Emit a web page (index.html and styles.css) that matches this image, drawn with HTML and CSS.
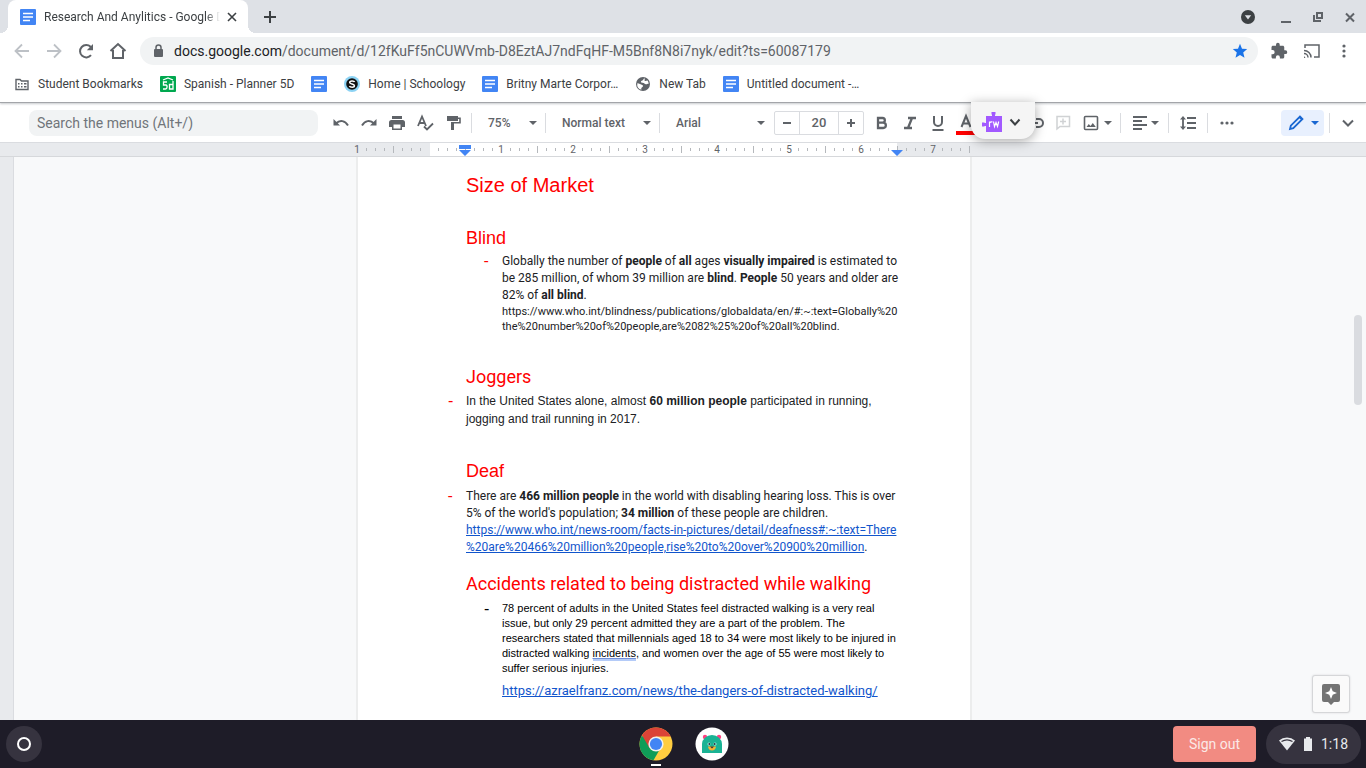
FILE: index.html
```html
<!DOCTYPE html>
<html lang="en">
<head>
<meta charset="utf-8">
<title>Research And Anylitics - Google Docs</title>
<link rel="stylesheet" href="styles.css">
</head>
<body>
<svg class="defs" aria-hidden="true">
  <symbol id="doc" viewBox="0 0 16 16"><rect width="16" height="16" rx="1" fill="#4285f4"/><path d="M3 4.500h10M3 8h10M3 11.500h7" stroke="#fff" stroke-width="1.700"/></symbol>
  <symbol id="caret" viewBox="0 0 8 4"><path d="M0 0h8L4 4z" fill="currentColor"/></symbol>
</svg>

<header class="browser">
  <div class="tabstrip">
    <div class="tab">
      <svg width="16" height="16"><use href="#doc"/></svg>
      <span class="tab-title">Research And Anylitics - Google Docs</span>
      <button class="bare" aria-label="Close tab"><svg width="16" height="16" viewBox="0 0 16 16"><path d="M4 4l8 8M12 4l-8 8" stroke="#3c4043" stroke-width="1.600"/></svg></button>
    </div>
    <button class="bare new-tab" aria-label="New tab"><svg width="16" height="16" viewBox="0 0 16 16"><path d="M8 2v12M2 8h12" stroke="#3c4043" stroke-width="2"/></svg></button>
    <div class="window-buttons">
      <button class="bare" aria-label="Search tabs"><svg width="16" height="16" viewBox="0 0 16 16"><circle cx="8" cy="8" r="7" fill="#3c4043"/><path d="M4.800 6.200h6.400L8 10.500z" fill="#dee1e6"/></svg></button>
      <button class="bare" aria-label="Minimize"><svg width="16" height="16" viewBox="0 0 16 16"><path d="M3 13h10" stroke="#5f6368" stroke-width="2"/></svg></button>
      <button class="bare" aria-label="Restore"><svg width="16" height="16" viewBox="0 0 16 16" fill="none" stroke="#5f6368" stroke-width="2"><path d="M7 4h5v5H7zM4 6v6h7"/></svg></button>
      <button class="bare" aria-label="Close window"><svg width="16" height="16" viewBox="0 0 16 16"><path d="M4 4.500l8 8M12 4.500l-8 8" stroke="#5f6368" stroke-width="2"/></svg></button>
    </div>
  </div>

  <div class="navbar">
    <button class="bare nav-button" aria-label="Back"><svg width="20" height="20" viewBox="0 0 20 20" fill="none" stroke="#bdc1c6" stroke-width="1.800"><path d="M17 10H4M10 3.500L3.500 10l6.500 6.500"/></svg></button>
    <button class="bare nav-button" aria-label="Forward"><svg width="20" height="20" viewBox="0 0 20 20" fill="none" stroke="#bdc1c6" stroke-width="1.800"><path d="M3 10h13M10 3.500l6.500 6.500-6.500 6.500"/></svg></button>
    <button class="bare nav-button" aria-label="Reload"><svg width="20" height="20" viewBox="0 0 20 20"><path d="M15 14.200A6.200 6.200 0 1 1 14.600 5.800L15.800 7" fill="none" stroke="#5f6368" stroke-width="2"/><path d="M17 3v6.200h-6.200z" fill="#5f6368"/></svg></button>
    <button class="bare nav-button" aria-label="Home"><svg width="20" height="20" viewBox="0 0 20 20" fill="none" stroke="#5f6368" stroke-width="2"><path d="M2.500 10L10 3l7.500 7M5 9v8h10V9"/></svg></button>
    <div class="omnibox">
      <svg width="14" height="16" viewBox="0 0 14 16"><rect x="3" y="6" width="9" height="8" rx="1" fill="#5f6368"/><path d="M5 6V4.500a2.500 2.500 0 0 1 5 0V6" fill="none" stroke="#5f6368" stroke-width="1.500"/></svg>
      <span class="url"><b>docs.google.com</b>/document/d/12fKuFf5nCUWVmb-D8EztAJ7ndFqHF-M5Bnf8N8i7nyk/edit?ts=60087179</span>
      <button class="bare" aria-label="Edit bookmark"><svg width="16" height="16" viewBox="0 0 16 16"><path d="M8 .8l2 4.900 5.200.4-4 3.400 1.300 5.200L8 12l-4.500 2.700 1.300-5.200-4-3.400L6 5.700z" fill="#1a73e8"/></svg></button>
    </div>
    <div class="nav-tools">
      <button class="bare" aria-label="Extensions"><svg width="18" height="18" viewBox="0 0 24 24"><path d="M20.500 11H19V7c0-1.100-.9-2-2-2h-4V3.500a2.500 2.500 0 0 0-5 0V5H4c-1.100 0-2 .9-2 2v3.800h1.500a2.700 2.700 0 0 1 0 5.400H2V20c0 1.100.9 2 2 2h3.800v-1.500a2.700 2.700 0 0 1 5.400 0V22H17c1.100 0 2-.9 2-2v-4h1.500a2.500 2.500 0 0 0 0-5z" fill="#5f6368"/></svg></button>
      <button class="bare" aria-label="Cast"><svg width="18" height="18" viewBox="0 0 18 18" fill="none" stroke="#5f6368" stroke-width="1.500"><path d="M2 6V3h14v12h-5M1 8.500a7 7 0 0 1 7 7M1 11.500a4 4 0 0 1 4 4"/><path d="M1 14l1.500 2H1z" fill="#5f6368" stroke="none"/></svg></button>
      <button class="bare" aria-label="Menu"><svg width="16" height="16" viewBox="0 0 16 16" fill="#5f6368"><circle cx="8" cy="3" r="1.600"/><circle cx="8" cy="8" r="1.600"/><circle cx="8" cy="13" r="1.600"/></svg></button>
    </div>
  </div>

  <nav class="bookmarks">
    <a href="#"><svg width="16" height="16" viewBox="0 0 16 16"><path d="M2 3.500h4l1.500 1.500H14v8.500H2z" fill="none" stroke="#5f6368" stroke-width="1.400"/><path d="M4 7h1.500v1.500H4zM4 10h1.500v1.500H4zM7 7h1.500v1.500H7zM7 10h1.500v1.500H7zM10 7h2.500v1.500H10zM10 10h2.500v1.500H10z" fill="#5f6368"/></svg>Student Bookmarks</a>
    <a href="#"><svg width="16" height="16" viewBox="0 0 16 16"><rect width="16" height="16" rx="1" fill="#00a84f"/><path d="M3 4l5-2 5 2M7 6H3.500v3H6c1.500 0 1.500 4-.5 4H3M13 5v8H9.500V8.500H13" fill="none" stroke="#fff" stroke-width="1.300"/></svg>Spanish - Planner 5D</a>
    <a href="#" aria-label="Google Docs"><svg width="16" height="16"><use href="#doc"/></svg></a>
    <a href="#"><svg width="16" height="16" viewBox="0 0 16 16"><circle cx="8" cy="8" r="8" fill="#8cd3f4"/><circle cx="8" cy="8" r="5.800" fill="#111"/><path d="M10.600 6C10 4.400 5.700 4.500 5.700 6.400S10.400 7.700 10.400 9.700 6.200 11.500 5.400 10" fill="none" stroke="#fff" stroke-width="1.500"/></svg>Home | Schoology</a>
    <a href="#"><svg width="16" height="16"><use href="#doc"/></svg>Britny Marte Corpor…</a>
    <a href="#"><svg width="16" height="16" viewBox="0 0 16 16"><circle cx="8" cy="8" r="7" fill="#5f6368"/><path d="M9.500 2.200c-1.500.6-.6 1.600-2.200 2.200-1.800.5-2 2 .2 2.300 2.200.1 1.800 1.700 3.600 1.600 1 0 1.500-.7 2.600-.6A6 6 0 0 0 12.500 4.500c-1.200.2-1.800.8-2.600.4-.9-.5.400-1.600-.4-2.700zM2.300 7.200c2 .2 3.500 1.200 4.900 1.700 1.600.6.600 2-.4 2.600-.7.500-.6 1.600-.3 2.300a6 6 0 0 1-4.200-6.600z" fill="#fff"/></svg>New Tab</a>
    <a href="#"><svg width="16" height="16"><use href="#doc"/></svg>Untitled document -…</a>
  </nav>
</header>

<main class="docs">
  <div class="toolbar">
    <input class="menu-search" type="text" aria-label="Search the menus" placeholder="Search the menus (Alt+/)">
    <div class="group">
      <button class="tool" aria-label="Undo"><svg width="18" height="18" viewBox="0 0 18 18"><path d="M1.500 5v6.500H8z" fill="#5f6368"/><path d="M4 9.500c4-4 9-3 12 2" fill="none" stroke="#5f6368" stroke-width="2"/></svg></button>
      <button class="tool" aria-label="Redo"><svg width="18" height="18" viewBox="0 0 18 18"><path d="M16.500 5v6.500H10z" fill="#5f6368"/><path d="M14 9.500c-4-4-9-3-12 2" fill="none" stroke="#5f6368" stroke-width="2"/></svg></button>
      <button class="tool" aria-label="Print"><svg width="18" height="18" viewBox="0 0 18 18"><path d="M4 2h10v3H4zM3.500 6h11A2.500 2.500 0 0 1 17 8.500V13h-3v3H4v-3H1V8.500A2.500 2.500 0 0 1 3.500 6z" fill="#5f6368"/><path d="M5.500 10.500h7v4h-7z" fill="#fff"/></svg></button>
      <button class="tool" aria-label="Spelling check"><svg width="18" height="18" viewBox="0 0 18 18" fill="none" stroke="#5f6368" stroke-width="1.800"><path d="M2 12L6 2.500 10 12M3.500 9h5M8 12.500l3 3 6-6"/></svg></button>
      <button class="tool" aria-label="Paint format"><svg width="18" height="18" viewBox="0 0 18 18"><path d="M3 2h11v5H3z" fill="#5f6368"/><path d="M14 4.200h2v4.600H8.500" fill="none" stroke="#5f6368" stroke-width="1.600"/><path d="M7 8h3v8H7z" fill="#5f6368"/></svg></button>
    </div>
    <button class="drop zoom"><span>75%</span><svg width="8" height="4"><use href="#caret"/></svg></button>
    <button class="drop style"><span>Normal text</span><svg width="8" height="4"><use href="#caret"/></svg></button>
    <button class="drop font"><span>Arial</span><svg width="8" height="4"><use href="#caret"/></svg></button>
    <div class="size">
      <button aria-label="Decrease font size"><svg width="10" height="10" viewBox="0 0 10 10"><path d="M1 5h8" stroke="#5f6368" stroke-width="2"/></svg></button>
      <input type="text" aria-label="Font size" value="20">
      <button aria-label="Increase font size"><svg width="10" height="10" viewBox="0 0 10 10"><path d="M1 5h8M5 1v8" stroke="#5f6368" stroke-width="2"/></svg></button>
    </div>
    <div class="group formats">
      <button class="tool" aria-label="Bold"><svg width="18" height="18" viewBox="0 0 18 18"><path d="M5 4h4.500a2.300 2.300 0 0 1 0 4.700H5zM5 8.700h5.200a2.600 2.600 0 0 1 0 5.300H5z" fill="none" stroke="#5f6368" stroke-width="2.300"/></svg></button>
      <button class="tool" aria-label="Italic"><svg width="18" height="18" viewBox="0 0 18 18" fill="none" stroke="#5f6368" stroke-width="2.300"><path d="M7 4h8M3 14h8M11 4L7 14"/></svg></button>
      <button class="tool" aria-label="Underline"><svg width="18" height="18" viewBox="0 0 18 18" fill="none" stroke="#5f6368" stroke-width="2"><path d="M5 2v6a4 4 0 0 0 8 0V2M3.500 16h11"/></svg></button>
      <button class="tool" aria-label="Text color"><svg width="20" height="24" viewBox="0 0 20 24"><path d="M5.500 16L10 5l4.500 11M7 12.500h6" fill="none" stroke="#5f6368" stroke-width="2"/><path d="M0 20h20v4H0z" fill="#f00"/></svg></button>
      <button class="tool highlight" aria-label="Highlight color"></button>
      <button class="tool" aria-label="Insert link"><svg width="18" height="18" viewBox="0 0 18 18" fill="none" stroke="#5f6368" stroke-width="2"><path d="M8 5H5a4 4 0 0 0 0 8h3M10 5h3a4 4 0 0 1 0 8h-3M6 9h6"/></svg></button>
      <button class="tool" aria-label="Add comment"><svg width="18" height="18" viewBox="0 0 18 18" fill="none" stroke="#d0d2d4" stroke-width="1.500"><path d="M3 2.500h12.500v10H6L3 15zM9 4.500v6M6 7.500h6"/></svg></button>
      <button class="tool wide" aria-label="Insert image"><svg width="18" height="18" viewBox="0 0 18 18"><rect x="2.500" y="2.500" width="13" height="13" rx="1" fill="none" stroke="#5f6368" stroke-width="1.600"/><path d="M4.500 13l2.300-3 1.700 2 2.300-3 3 4z" fill="#5f6368"/></svg><svg width="8" height="4"><use href="#caret"/></svg></button>
    </div>
    <div class="group ruled align">
      <button class="tool wide" aria-label="Align"><svg width="18" height="18" viewBox="0 0 18 18" stroke="#5f6368" stroke-width="1.800"><path d="M2 3h14M2 7h9M2 11h14M2 15h9"/></svg><svg width="8" height="4"><use href="#caret"/></svg></button>
    </div>
    <div class="group ruled">
      <button class="tool" aria-label="Line spacing"><svg width="18" height="18" viewBox="0 0 18 18"><path d="M8 4h9M8 9h9M8 14h9M4 4v10" stroke="#5f6368" stroke-width="1.800"/><path d="M1 5.500L4 2l3 3.500zM1 12.500L4 16l3-3.500z" fill="#5f6368"/></svg></button>
    </div>
    <div class="group ruled">
      <button class="tool" aria-label="More"><svg width="18" height="18" viewBox="0 0 18 18" fill="#5f6368"><circle cx="4" cy="9" r="1.600"/><circle cx="9" cy="9" r="1.600"/><circle cx="14" cy="9" r="1.600"/></svg></button>
    </div>
    <button class="mode" aria-label="Editing mode"><svg width="18" height="18" viewBox="0 0 18 18"><path d="M3 15l.8-3.300 8.700-8.700 2.500 2.500-8.700 8.700z" fill="none" stroke="#1967d2" stroke-width="1.800"/><path d="M12 2.300l1-1 3.700 3.700-1 1z" fill="#1967d2"/></svg><svg width="8" height="4"><use href="#caret"/></svg></button>
    <div class="group ruled last">
      <button class="tool" aria-label="Hide the menus"><svg width="18" height="18" viewBox="0 0 18 18" fill="none" stroke="#5f6368" stroke-width="2"><path d="M4 6.500l5 5 5-5"/></svg></button>
    </div>
    <button class="extension" aria-label="Read and write">
      <svg width="20" height="20" viewBox="0 0 20 20"><path d="M4 4h6V2.500h-.5V0h4v2.500H13V4h7v16H4v-6H2.500v.5H0v-4h2.500v.5H4z" fill="#a259ff"/><path d="M7.500 15V9.500M7.500 11q1-1.500 3-1M11.500 9.500l1 5 1.500-4 1.500 4 1.200-5" fill="none" stroke="#fff" stroke-width="1.200"/></svg>
      <svg width="12" height="12" viewBox="0 0 12 12"><path d="M1.500 3.500L6 8.500l4.500-5" fill="none" stroke="#3c4043" stroke-width="2"/></svg>
    </button>
  </div>

  <div class="ruler">
    <svg class="ruler-scale" viewBox="0 0 612 13" width="612" height="13">
      <defs><pattern id="inch" width="72" height="14" patternUnits="userSpaceOnUse"><path d="M9 5h1v3h-1zM18 5h1v3h-1zM27 5h1v3h-1zM36 3h1v7h-1zM45 5h1v3h-1zM54 5h1v3h-1zM63 5h1v3h-1z" fill="#b5b8bc"/></pattern></defs>
      <path d="M73 0h467v13H73z" fill="#fff"/>
      <path d="M0 0h613v13H0z" fill="url(#inch)"/>
      <g class="ruler-numbers"><text x="0" y="10">1</text><text x="144" y="10">1</text><text x="216" y="10">2</text><text x="288" y="10">3</text><text x="360" y="10">4</text><text x="432" y="10">5</text><text x="504" y="10">6</text><text x="576" y="10">7</text></g>
      <path d="M102 2h12v4h-12zM102 7h12l-6 6zM534 7h12l-6 6z" fill="#4285f4"/>
    </svg>
  </div>

  <div class="workspace">
    <div class="side-ruler"></div>
    <div class="canvas">
      <article class="page">
        <h1 class="arial">Size of Market</h1>

        <h2 class="arial">Blind</h2>
        <ul class="deep">
          <li class="red">Globally the number of <b>people</b> of <b>all</b> ages <b>visually impaired</b> is estimated to<br>be 285 million, of whom 39 million are <b>blind</b>. <b>People</b> 50 years and older are<br>82% of <b>all blind</b>.
            <div class="source">https://www.who.int/blindness/publications/globaldata/en/#:~:text=Globally%20<br>the%20number%20of%20people,are%2082%25%20of%20all%20blind.</div></li>
        </ul>

        <h2 class="joggers">Joggers</h2>
        <ul>
          <li class="red arial loose">In the United States alone, almost <b>60 million people</b> participated in running,<br>jogging and trail running in 2017.</li>
        </ul>

        <h2 class="arial deaf">Deaf</h2>
        <ul class="spaced">
          <li class="red">There are <b>466 million people</b> in the world with disabling hearing loss. This is over<br>5% of the world's population; <b>34 million</b> of these people are children.<br><a href="#">https://www.who.int/news-room/facts-in-pictures/detail/deafness#:~:text=There<br>%20are%20466%20million%20people,rise%20to%20over%20900%20million</a>.</li>
        </ul>

        <h2 class="accidents">Accidents related to being distracted while walking</h2>
        <ul class="deep spaced">
          <li class="arial small">78 percent of adults in the United States feel distracted walking is a very real<br>issue, but only 29 percent admitted they are a part of the problem. The<br>researchers stated that millennials aged 18 to 34 were most likely to be injured in<br>distracted walking <span class="suggestion">incidents</span>, and women over the age of 55 were most likely to<br>suffer serious injuries.</li>
        </ul>
        <p class="reference"><a href="#">https://azraelfranz.com/news/the-dangers-of-distracted-walking/</a></p>
      </article>
    </div>
    <div class="scroll-thumb"></div>
    <button class="explore" aria-label="Explore"><svg width="20" height="22" viewBox="0 0 20 22"><path d="M3 1h14a2 2 0 0 1 2 2v14a2 2 0 0 1-2 2h-4l-3 3-3-3H3a2 2 0 0 1-2-2V3a2 2 0 0 1 2-2z" fill="#737373"/><path d="M10 4l1.700 4.300L16 10l-4.300 1.700L10 16l-1.700-4.300L4 10l4.300-1.700z" fill="#fff"/></svg></button>
  </div>
</main>

<footer class="shelf">
  <button class="launcher" aria-label="Launcher"><svg width="16" height="16" viewBox="0 0 16 16"><circle cx="8" cy="8" r="6" fill="none" stroke="#fff" stroke-width="2"/></svg></button>
  <div class="apps">
    <button class="app active" aria-label="Chrome"><svg width="34" height="34" viewBox="0 0 34 34"><circle cx="17" cy="17" r="16.500" fill="#ffcd40"/><path d="M17 17L2.700 8.800A16.500 16.500 0 0 0 14.500 33.300L21 22z" fill="#0f9d58"/><path d="M17 17v-7.500h14.700A16.500 16.500 0 0 0 3 8.300L10.500 21z" fill="#db4437"/><circle cx="17" cy="17" r="7.600" fill="#f1f1f1"/><circle cx="17" cy="17" r="6.100" fill="#4285f4"/></svg></button>
    <button class="app" aria-label="Monster app"><svg width="34" height="34" viewBox="0 0 34 34"><circle cx="17" cy="17" r="16.500" fill="#fff"/><circle cx="10" cy="10" r="2.200" fill="#ff4081"/><circle cx="24" cy="10" r="2.200" fill="#ff4081"/><path d="M7 26V17a10 9 0 0 1 20 0v9z" fill="#1ab394"/><circle cx="14" cy="17" r="1.500" fill="#bfe"/><circle cx="20" cy="17" r="1.500" fill="#bfe"/><circle cx="14.300" cy="17" r="1" fill="#234"/><circle cx="19.700" cy="17" r="1" fill="#234"/><path d="M13 19.500h8q-.5 4-4 4t-4-4z" fill="#f9b233"/><path d="M15 19.500h4l-2 2z" fill="#333"/></svg></button>
  </div>
  <div class="tray">
    <button class="sign-out">Sign out</button>
    <button class="status"><svg width="16" height="14" viewBox="0 0 16 14"><path d="M0 3.500a12 12 0 0 1 16 0L8 13.500z" fill="#e8eaed"/><path d="M2.500 4.600q5.500-3.400 11 0" fill="none" stroke="#36333f" stroke-width="1.200"/></svg><svg width="8" height="14" viewBox="0 0 8 14"><path d="M2 0h4v1.500h2V14H0V1.500h2z" fill="#e8eaed"/></svg><span>1:18</span></button>
  </div>
</footer>
</body>
</html>
```
FILE: styles.css
```css
* { box-sizing: border-box; }
body {
  margin: 0;
  height: 100vh;
  display: flex;
  flex-direction: column;
  overflow: hidden;
  font-family: Roboto, "Liberation Sans", sans-serif;
  font-size: 12px;
  color: #3c4043;
  background: #fff;
}
button, input { font: inherit; color: inherit; border: 0; padding: 0; margin: 0; background: none; }
svg { display: block; flex: none; }
.defs { position: absolute; width: 0; height: 0; }
.bare { display: flex; align-items: center; justify-content: center; }

/* Browser frame */
.browser { flex: none; position: relative; border-bottom: 1px solid #a3a5a9; box-shadow: 0 1px 2px #c8cacd; z-index: 1; }
.tabstrip { display: flex; align-items: center; height: 33px; padding: 0 8px; background: #dee1e6; }
.tab {
  position: relative;
  display: flex;
  align-items: center;
  width: 240px;
  height: 33px;
  padding: 0 8px 0 12px;
  background: #fff;
  border-radius: 8px 8px 0 0;
}
.tab::before, .tab::after { content: ""; position: absolute; bottom: 0; width: 8px; height: 8px; }
.tab::before { right: 100%; background: radial-gradient(circle at 0 0, #dee1e6 8px, #fff 8px); }
.tab::after { left: 100%; background: radial-gradient(circle at 100% 0, #dee1e6 8px, #fff 8px); }
.tab-title {
  flex: 1;
  margin: 0 4px 0 8px;
  overflow: hidden;
  white-space: nowrap;
  mask-image: linear-gradient(to right, #000 92%, transparent);
}
.new-tab { margin-left: 14px; }
.window-buttons { display: flex; gap: 16px; margin-left: auto; }
.window-buttons button:first-child { margin-right: 6px; }

.navbar { display: flex; align-items: center; height: 36px; padding: 0 14px 0 6px; }
.nav-button { width: 32px; height: 32px; }
.omnibox {
  flex: 1;
  display: flex;
  align-items: center;
  height: 28px;
  margin-left: 6px;
  padding: 0 10px 0 11px;
  border-radius: 14px;
  background: #f1f3f4;
}
.url { flex: 1; margin-left: 9px; font-size: 14px; color: #5f6368; white-space: nowrap; overflow: hidden; }
.url b { font-weight: 400; color: #202124; }
.nav-tools { display: flex; align-items: center; gap: 15px; margin-left: 12px; }

.bookmarks { display: flex; align-items: center; gap: 17px; height: 33px; padding: 0 14px 4px; }
.bookmarks a { display: flex; align-items: center; gap: 8px; color: #3c4043; text-decoration: none; white-space: nowrap; }

/* Editor toolbar */
.docs { flex: 1; min-height: 0; display: flex; flex-direction: column; color: #5f6368; }
.toolbar { position: relative; z-index: 2; display: flex; align-items: center; height: 39px; padding: 0 4px 0 29px; }
.menu-search { width: 289px; height: 26px; padding: 0 8px; border-radius: 8px; background: #f1f3f4; font-size: 14px; }
.menu-search::placeholder { color: #70757a; opacity: 1; }
.group { display: flex; align-items: center; }
.menu-search + .group { margin: 0 4px 0 9px; }
.tool { display: flex; align-items: center; justify-content: center; width: 28px; height: 26px; }
.tool.wide { width: 40px; gap: 4px; }
.drop {
  display: flex;
  align-items: center;
  justify-content: space-between;
  height: 20px;
  padding: 0 8px 0 16px;
  border-left: 1px solid #dadce0;
  font-weight: 500;
}
.zoom { width: 74px; }
.style { width: 114px; }
.drop.font { width: 106px; padding-right: 0; }
.size { display: flex; height: 24px; margin-left: 9px; border: 1px solid #dadce0; border-radius: 2px; }
.size button { width: 24px; display: flex; align-items: center; justify-content: center; }
.size input { width: 40px; text-align: center; font-size: 13px; font-weight: 500; border: solid #dadce0; border-width: 0 1px; }
.formats { margin: 0 3px 0 4px; }
.highlight { width: 41px; }
.ruled { height: 20px; padding: 0 5px; border-left: 1px solid #dadce0; }
.align .wide { width: 37px; gap: 2px; }
.mode {
  display: flex;
  align-items: center;
  justify-content: center;
  gap: 6px;
  width: 43px;
  height: 26px;
  margin: 0 5px 0 auto;
  border-radius: 4px;
  background: #e8f0fe;
  color: #1967d2;
}
.last { padding: 0 0 0 4px; }
.extension {
  position: absolute;
  top: -1px;
  left: 971px;
  display: flex;
  align-items: center;
  justify-content: center;
  gap: 7px;
  width: 64px;
  height: 37px;
  padding: 2px 4px 0 0;
  border-radius: 0 0 14px 14px;
  background: #f5f5f5;
  box-shadow: 0 2px 12px rgba(0, 0, 0, .35);
}

/* Ruler and canvas */
.ruler { flex: none; display: flex; justify-content: center; height: 14px; padding-right: 40px; background: #e8eaed; border-top: 1px solid #dadce0; }
.ruler-scale { overflow: visible; }
.ruler-numbers { font-size: 10px; fill: #5f6368; text-anchor: middle; }
.workspace { position: relative; flex: 1; min-height: 0; display: flex; overflow: hidden; border-top: 1px solid #d6d8db; }
.side-ruler { width: 14px; background: #e8eaed; border-right: 1px solid #dadce0; }
.canvas { flex: 1; display: flex; justify-content: center; padding-right: 52px; background: #f8f9fa; }
.page {
  width: 612px;
  padding: 16px 72px 0 108px;
  background: #fff;
  box-shadow: 0 0 0 2px #eceded;
  color: #202124;
  line-height: 17px;
}
.arial { font-family: "Liberation Sans", Arial, sans-serif; }
.page h1, .page h2 { margin: 0; font-weight: 400; color: #f00; white-space: nowrap; }
.page h1 { font-size: 20px; line-height: 24px; margin-bottom: 31px; }
.page h2 { font-size: 18px; line-height: 20px; }
.page ul { list-style: none; margin: 5px 0 0; padding: 0; }
.page .deep { padding-left: 36px; }
.page .spaced { margin-top: 7px; }
.page li { position: relative; white-space: nowrap; }
.page li::before { content: "-"; position: absolute; left: -18px; font-size: 16px; }
.page .red::before { color: #f00; }
.source { font-size: 11px; line-height: 15px; }
.page .joggers { margin-top: 33px; }
.page .loose { line-height: 18px; }
.page .deaf { margin-top: 33px; }
.page .accidents { margin-top: 18px; }
.page .small { font-size: 11px; line-height: 15px; color: #000; }
.page a { color: #1155cc; }
.suggestion { border-bottom: 2px solid #b4cbf8; text-decoration: underline #6f8fd8; }
.reference { margin: 6px 0 0; padding-left: 36px; font-size: 13px; line-height: 18px; white-space: nowrap; }
.scroll-thumb { position: absolute; right: 4px; top: 28%; width: 8px; height: 16%; border-radius: 4px; background: #dadce0; }
.explore {
  position: absolute;
  right: 16px;
  bottom: 7px;
  display: flex;
  align-items: center;
  justify-content: center;
  width: 38px;
  height: 38px;
  border: 1px solid #d5d6d8;
  border-radius: 3px;
  background: #fafafa;
  box-shadow: 0 0 2px #d5d6d8;
}

/* Shelf */
.shelf { flex: none; display: grid; grid-template-columns: 1fr auto 1fr; align-items: center; height: 48px; padding: 0 5px 0 6px; background: #1e1c28; }
.launcher { display: flex; align-items: center; justify-content: center; width: 36px; height: 36px; border-radius: 18px; background: #36333f; }
.apps { display: flex; gap: 22px; }
.app { position: relative; }
.active::after { content: ""; position: absolute; left: 12px; bottom: -5px; width: 10px; height: 2px; background: #fff; }
.tray { display: flex; align-items: center; justify-content: flex-end; gap: 10px; }
.sign-out { width: 83px; height: 36px; border-radius: 4px; background: #f28b82; color: #fbe9e7; font-size: 14px; }
.status { display: flex; align-items: center; justify-content: center; gap: 9px; width: 95px; height: 40px; border-radius: 20px; background: #36333f; color: #e8eaed; font-size: 14px; }
```
